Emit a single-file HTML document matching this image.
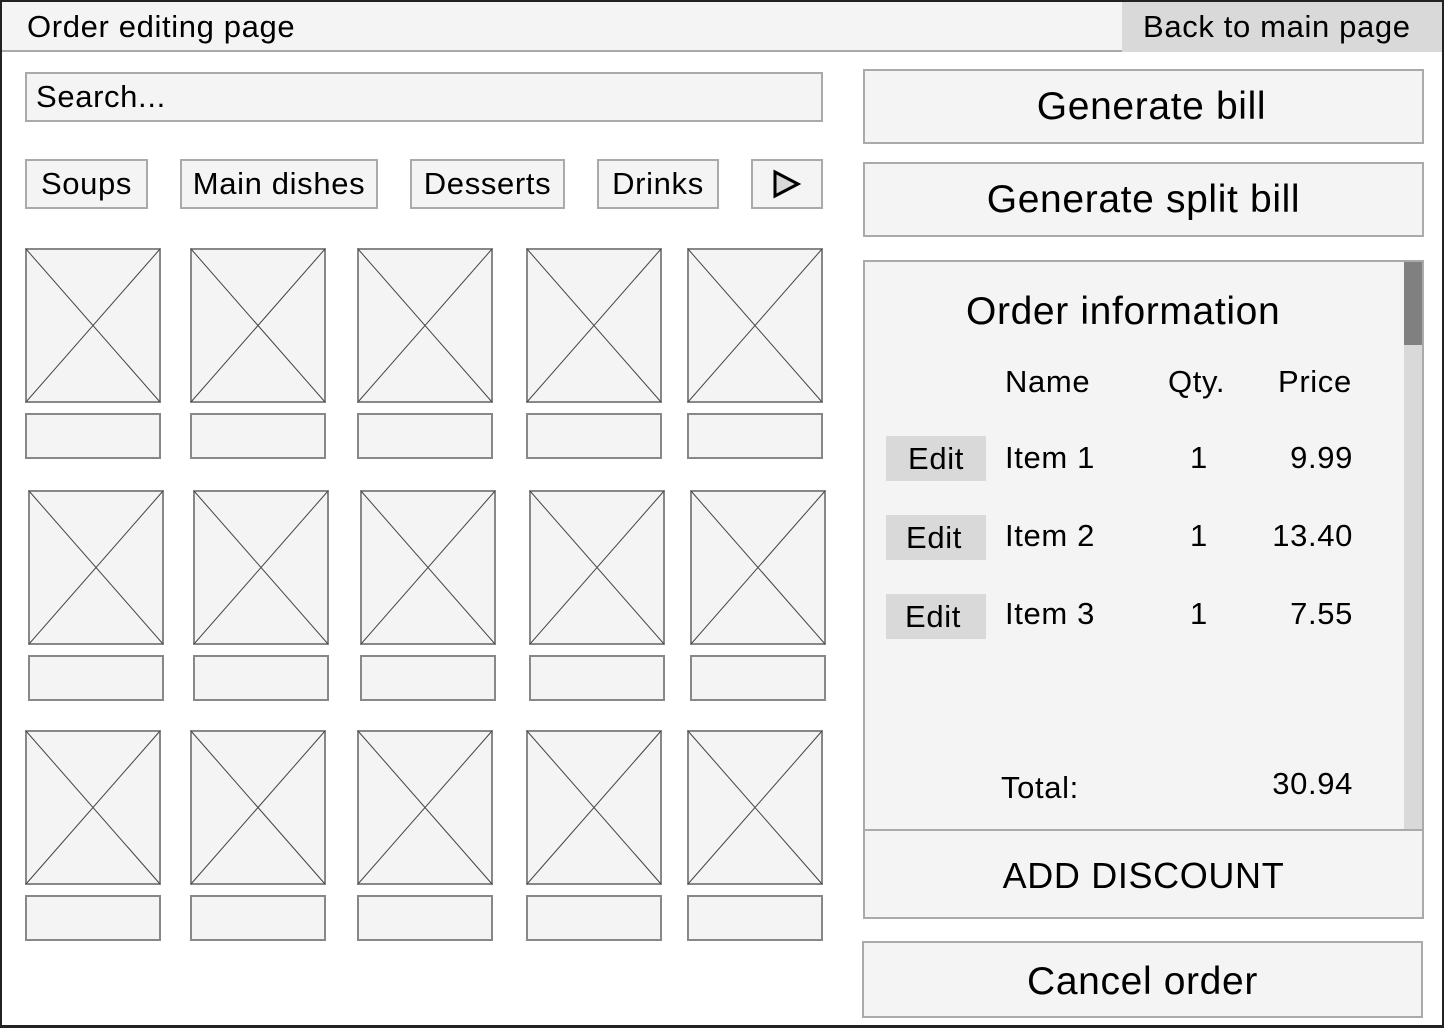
<!DOCTYPE html>
<html><head><meta charset="utf-8"><style>
*{box-sizing:border-box;margin:0;padding:0}
body{width:1444px;height:1028px;background:#fff;position:relative;overflow:hidden;font-family:"Liberation Sans",sans-serif;color:#000;letter-spacing:0.04em}
.a{position:absolute}
.b{position:absolute;background:#f4f4f4;border:2px solid #aaa;display:flex;align-items:center;justify-content:center;white-space:nowrap}
.t{position:absolute;white-space:nowrap;line-height:1}
</style></head><body>
<div class="a" style="left:0;top:0;width:1444px;height:1028px;border:2px solid #222;border-bottom-width:3px"></div>
<div class="a" style="left:2px;top:2px;width:1120px;height:50px;background:#f4f4f4;border-bottom:2px solid #aaa"></div>
<div class="t" style="left:27px;top:11px;font-size:31px">Order editing page</div>
<div class="a" style="left:1122px;top:2px;width:320px;height:50px;background:#d9d9d9"></div>
<div class="t" style="left:1143px;top:11px;font-size:31px">Back to main page</div>

<div class="b" style="left:25px;top:72px;width:798px;height:50px;justify-content:flex-start;padding-left:9px;font-size:31px">Search...</div>

<div class="b" style="left:25px;top:159px;width:123px;height:50px;font-size:31px">Soups</div>
<div class="b" style="left:180px;top:159px;width:198px;height:50px;font-size:31px">Main dishes</div>
<div class="b" style="left:410px;top:159px;width:155px;height:50px;font-size:31px">Desserts</div>
<div class="b" style="left:597px;top:159px;width:122px;height:50px;font-size:31px">Drinks</div>
<div class="b" style="left:751px;top:159px;width:72px;height:50px">
<svg width="30" height="30" viewBox="0 0 30 30"><path d="M3 3 L26 15 L3 27 Z" fill="#d9d9d9" stroke="#000" stroke-width="3" stroke-linejoin="miter"/></svg></div>

<svg class="a" style="left:0;top:0" width="1444" height="1028">
<g fill="#f4f4f4" stroke="#888" stroke-width="2">
<g>
<rect x="26" y="249" width="134" height="153"/><rect x="26" y="414" width="134" height="44"/>
<rect x="191" y="249" width="134" height="153"/><rect x="191" y="414" width="134" height="44"/>
<rect x="358" y="249" width="134" height="153"/><rect x="358" y="414" width="134" height="44"/>
<rect x="527" y="249" width="134" height="153"/><rect x="527" y="414" width="134" height="44"/>
<rect x="688" y="249" width="134" height="153"/><rect x="688" y="414" width="134" height="44"/>
<path stroke="#444" stroke-width="1" fill="none" d="M26 249L160 402M160 249L26 402M191 249L325 402M325 249L191 402M358 249L492 402M492 249L358 402M527 249L661 402M661 249L527 402M688 249L822 402M822 249L688 402"/>
</g>
<g transform="translate(3,242)">
<rect x="26" y="249" width="134" height="153"/><rect x="26" y="414" width="134" height="44"/>
<rect x="191" y="249" width="134" height="153"/><rect x="191" y="414" width="134" height="44"/>
<rect x="358" y="249" width="134" height="153"/><rect x="358" y="414" width="134" height="44"/>
<rect x="527" y="249" width="134" height="153"/><rect x="527" y="414" width="134" height="44"/>
<rect x="688" y="249" width="134" height="153"/><rect x="688" y="414" width="134" height="44"/>
<path stroke="#444" stroke-width="1" fill="none" d="M26 249L160 402M160 249L26 402M191 249L325 402M325 249L191 402M358 249L492 402M492 249L358 402M527 249L661 402M661 249L527 402M688 249L822 402M822 249L688 402"/>
</g>
<g transform="translate(0,482)">
<rect x="26" y="249" width="134" height="153"/><rect x="26" y="414" width="134" height="44"/>
<rect x="191" y="249" width="134" height="153"/><rect x="191" y="414" width="134" height="44"/>
<rect x="358" y="249" width="134" height="153"/><rect x="358" y="414" width="134" height="44"/>
<rect x="527" y="249" width="134" height="153"/><rect x="527" y="414" width="134" height="44"/>
<rect x="688" y="249" width="134" height="153"/><rect x="688" y="414" width="134" height="44"/>
<path stroke="#444" stroke-width="1" fill="none" d="M26 249L160 402M160 249L26 402M191 249L325 402M325 249L191 402M358 249L492 402M492 249L358 402M527 249L661 402M661 249L527 402M688 249L822 402M822 249L688 402"/>
</g>
</g>
</svg>

<div class="b" style="left:863px;top:69px;width:561px;height:75px;font-size:39px;padding-left:16px">Generate bill</div>
<div class="b" style="left:863px;top:162px;width:561px;height:75px;font-size:39px">Generate split bill</div>

<div class="a" style="left:863px;top:260px;width:561px;height:571px;background:#f4f4f4;border:2px solid #aaa"></div>
<div class="a" style="left:1404px;top:262px;width:18px;height:568px;background:#d9d9d9"></div>
<div class="a" style="left:1404px;top:262px;width:18px;height:83px;background:#808080"></div>
<div class="t" style="left:966px;top:292px;font-size:39px">Order information</div>
<div class="t" style="left:1005px;top:366px;font-size:31px">Name</div>
<div class="t" style="left:1168px;top:366px;font-size:31px">Qty.</div>
<div class="t" style="left:1278px;top:366px;font-size:31px">Price</div>

<div class="a" style="left:886px;top:436px;width:100px;height:45px;background:#d9d9d9"></div>
<div class="t" style="left:908px;top:443px;font-size:31px">Edit</div>
<div class="t" style="left:1005px;top:442px;font-size:31px">Item 1</div>
<div class="t" style="left:1190px;top:442px;font-size:31px">1</div>
<div class="t" style="left:1252px;top:442px;width:101px;text-align:right;font-size:31px">9.99</div>

<div class="a" style="left:886px;top:515px;width:100px;height:45px;background:#d9d9d9"></div>
<div class="t" style="left:906px;top:522px;font-size:31px">Edit</div>
<div class="t" style="left:1005px;top:520px;font-size:31px">Item 2</div>
<div class="t" style="left:1190px;top:520px;font-size:31px">1</div>
<div class="t" style="left:1252px;top:520px;width:101px;text-align:right;font-size:31px">13.40</div>

<div class="a" style="left:886px;top:594px;width:100px;height:45px;background:#d9d9d9"></div>
<div class="t" style="left:905px;top:601px;font-size:31px">Edit</div>
<div class="t" style="left:1005px;top:598px;font-size:31px">Item 3</div>
<div class="t" style="left:1190px;top:598px;font-size:31px">1</div>
<div class="t" style="left:1252px;top:598px;width:101px;text-align:right;font-size:31px">7.55</div>

<div class="t" style="left:1001px;top:772px;font-size:31px">Total:</div>
<div class="t" style="left:1252px;top:768px;width:101px;text-align:right;font-size:31px">30.94</div>

<div class="b" style="left:863px;top:829px;width:561px;height:90px;font-size:36px;padding-top:4px">ADD DISCOUNT</div>
<div class="b" style="left:862px;top:941px;width:561px;height:77px;font-size:39px;padding-top:4px">Cancel order</div>
</body></html>
